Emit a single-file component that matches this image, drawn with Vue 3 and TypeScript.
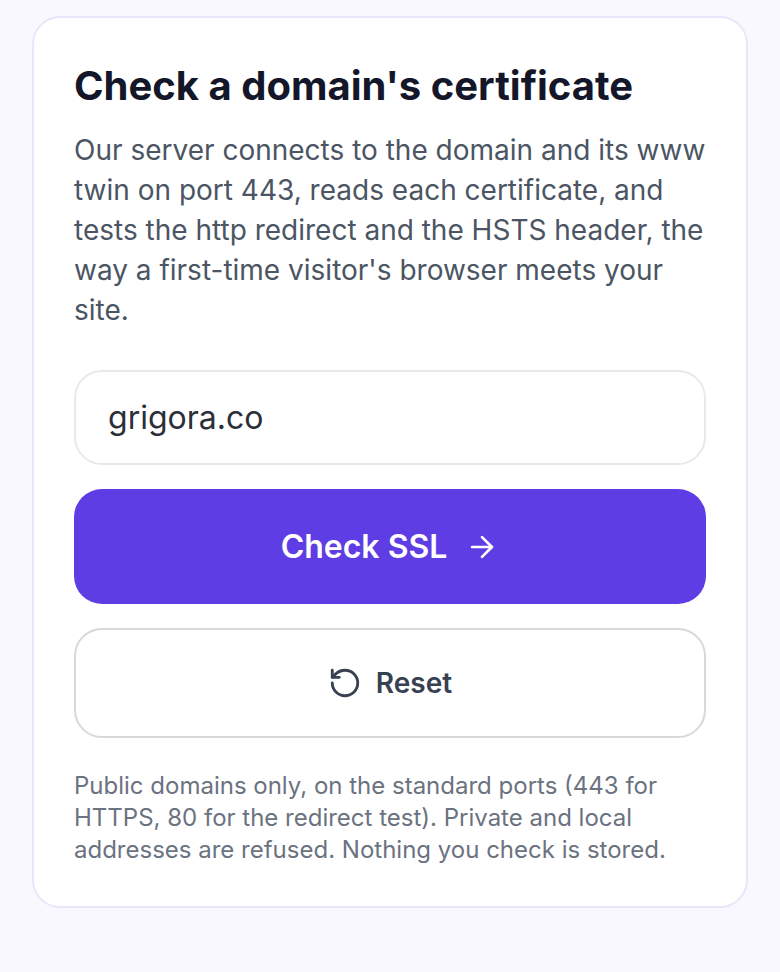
<script setup lang="ts">
import { ref } from 'vue'
const domain = ref('grigora.co')
</script>

<template>
  <main class="page">
    <section class="card">
      <h1 class="title">Check a domain's certificate</h1>
      <p class="desc">Our server connects to the domain and its www twin on port 443, reads each certificate, and tests the http redirect and the HSTS header, the way a first-time visitor's browser meets your site.</p>
      <input v-model="domain" class="input" type="text" />
      <button class="btn primary" type="button">
        <span>Check SSL</span>
        <svg class="arrow" viewBox="0 0 24 24" fill="none" stroke="currentColor" stroke-width="1.9" stroke-linecap="round" stroke-linejoin="round"><path d="M5 12h14" /><path d="m12 5 7 7-7 7" /></svg>
      </button>
      <button class="btn secondary" type="button">
        <svg class="reset" viewBox="0 0 24 24" fill="none" stroke="currentColor" stroke-width="2" stroke-linecap="round" stroke-linejoin="round"><path d="M3 12a9 9 0 1 0 9-9 9.75 9.75 0 0 0-6.74 2.74L3 8" /><path d="M3 3v5h5" /></svg>
        <span>Reset</span>
      </button>
      <p class="note">Public domains only, on the standard ports (443 for HTTPS, 80 for the redirect test). Private and local addresses are refused. Nothing you check is stored.</p>
    </section>
  </main>
</template>

<style>
html, body { margin: 0; background: #f9f8ff; }
</style>

<style scoped>
.page {
  box-sizing: border-box;
  min-height: 972px;
  padding: 16px 32px;
  background: #f9f8ff;
  font-family: Inter, "Liberation Sans", sans-serif;
}
.card {
  box-sizing: border-box;
  height: 892px;
  padding: 44px 40px 0;
  display: flex;
  flex-direction: column;
  background: #fff;
  border: 2px solid #e9e6fa;
  border-radius: 28px;
}
.title {
  margin: 0;
  font-size: 40px;
  line-height: 48px;
  font-weight: 700;
  color: #141729;
}
.desc {
  margin: 20px 0 0;
  font-size: 28px;
  line-height: 40px;
  color: #4b5563;
}
.input {
  box-sizing: border-box;
  margin-top: 40px;
  height: 95px;
  width: 100%;
  padding: 0 32px;
  font: inherit;
  font-size: 32px;
  color: #2b2f38;
  background: #fff;
  border: 2px solid #e9e9ec;
  border-radius: 28px;
  outline: none;
}
.btn {
  box-sizing: border-box;
  width: 100%;
  display: flex;
  align-items: center;
  justify-content: center;
  font-family: inherit;
  font-weight: 600;
}
.primary {
  margin-top: 24px;
  height: 115px;
  gap: 18px;
  font-size: 32px;
  color: #fff;
  background: #5f3de4;
  border: 0;
  border-radius: 28px;
}
.arrow { width: 34px; height: 34px; }
.secondary {
  margin-top: 24px;
  height: 110px;
  gap: 14px;
  font-size: 28px;
  color: #374151;
  background: #fff;
  border: 2px solid #d6d8dc;
  border-radius: 28px;
}
.reset { width: 34px; height: 34px; }
.note {
  margin: 32px 0 0;
  font-size: 24px;
  line-height: 32px;
  color: #6b7280;
}
</style>
